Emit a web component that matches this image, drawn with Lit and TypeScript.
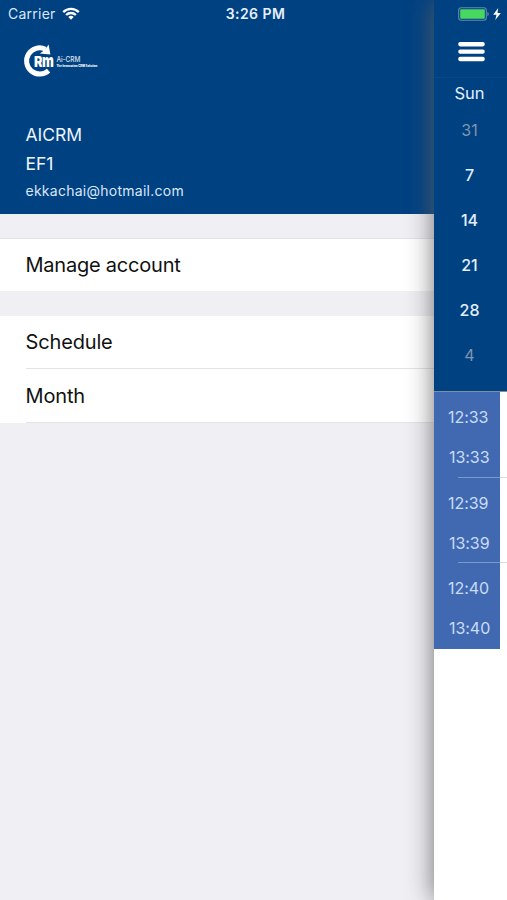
import { LitElement, html, css, svg } from "lit";
import { customElement } from "lit/decorators.js";

@customElement("status-bar")
class StatusBar extends LitElement {
  static styles = css`
    :host { display: grid; grid-template-columns: 1fr auto 1fr; align-items: center; height: 27px; padding: 0 6px 0 8px; color: #d9e7f8; font-size: 14px; }
    .left, .right { display: flex; align-items: center; }
    .left { gap: 6px; letter-spacing: 0.25px; }
    .right { justify-content: flex-end; gap: 4px; }
    .clock { font-weight: 600; font-size: 14px; letter-spacing: 0.46px; color: #e6effb; padding-left: 2px; }
    svg { display: block; }
  `;
  render() {
    return html`
      <div class="left">
        <span>Carrier</span>
        <svg width="18" height="13" viewBox="0 0 18 13" fill="none" stroke="#fff" stroke-width="2.3">
          <path d="M1.2 5.1A11 11 0 0 1 16.8 5.1" />
          <path d="M4.1 8A7 7 0 0 1 13.9 8" />
          <path d="M9 12.7L6.3 10A3.9 3.9 0 0 1 11.7 10Z" fill="#fff" stroke="none" />
        </svg>
      </div>
      <span class="clock">3:26 PM</span>
      <div class="right">
        <svg width="31" height="14" viewBox="0 0 31 14">
          <rect x=".7" y=".7" width="27.6" height="12.6" rx="2.5" fill="none" stroke="#6489ad" stroke-width="1.1" />
          <rect x="2.2" y="2.2" width="24.6" height="9.6" rx="1" fill="#47d85f" />
          <path d="M29.4 4.8Q30.8 5.5 30.8 7T29.4 9.2Z" fill="#6489ad" />
        </svg>
        <svg width="8" height="12" viewBox="0 0 8 12"><path d="M5.2 0L.2 6.7H3.5L2.3 12L7.8 4.9H4.5Z" fill="#fff" /></svg>
      </div>
    `;
  }
}

@customElement("brand-logo")
class BrandLogo extends LitElement {
  static styles = css`
    :host { display: block; }
    svg { display: block; }
    .mono { font: 900 14px Inter, "Liberation Sans", sans-serif; }
    .small { font-size: 18px; }
    .name { font: 500 7px Inter, "Liberation Sans", sans-serif; }
    .tag { font: 800 2.8px Inter, "Liberation Sans", sans-serif; }
  `;
  render() {
    return html`
      <svg width="78" height="34" viewBox="0 0 78 34" fill="#fff">
        <path d="M25.6 27.6A13.1 13.1 0 1 1 22.4 6.2" fill="none" stroke="#fff" stroke-width="5" />
        <path d="M25.6 1.6L27.4 11.6L16.8 10.4Q22 8 25.6 1.6Z" />
        <g class="mono" stroke="#004182" stroke-width="2" paint-order="stroke">
          <text x="10.9" y="23.6" textLength="8.8" lengthAdjust="spacingAndGlyphs">R</text>
          <text class="small" x="19" y="23.6" textLength="11.8" lengthAdjust="spacingAndGlyphs">m</text>
        </g>
        <text class="name" x="33.4" y="18.9" textLength="24" lengthAdjust="spacingAndGlyphs" opacity=".85">Ai-CRM</text>
        <text class="tag" x="33.4" y="24" textLength="41" lengthAdjust="spacingAndGlyphs">The Innovation CRM Solution</text>
      </svg>
    `;
  }
}

@customElement("side-drawer")
class SideDrawer extends LitElement {
  static styles = css`
    :host { display: block; background: #efeff4; }
    .profile { box-sizing: border-box; height: 214px; padding: 43px 23px 0; background: #004182; color: #eef5fd; }
    .who { padding: 43px 3px 0 2.5px; font-size: 17.5px; line-height: 29px; }
    .who div { height: 29px; }
    .who .mail { font-size: 14px; line-height: 25px; letter-spacing: 0.26px; color: #d9e7f8; }
    .code { letter-spacing: -0.1px; }
    .group { background: #fff; margin-top: 24px; color: #111; font-size: 20px; letter-spacing: -0.15px; }
    .group.first { border-top: 1px solid #e2e2e5; }
    .row { box-sizing: border-box; height: 53px; margin-left: 25.5px; line-height: 53px; }
    .first .row { height: 52px; }
    .lined { margin-top: 25px; }
    .lined .row { border-bottom: 1px solid #e4e4e8; line-height: 52px; }
    .lined .row + .row { height: 53.5px; line-height: 54px; }
    .wide { letter-spacing: -0.22px; }
  `;
  render() {
    return html`
      <div class="profile">
        <brand-logo></brand-logo>
        <div class="who">
          <div>AICRM</div>
          <div class="code">EF1</div>
          <div class="mail">ekkachai@hotmail.com</div>
        </div>
      </div>
      <div class="group first"><div class="row wide">Manage account</div></div>
      <div class="group lined">
        <div class="row">Schedule</div>
        <div class="row">Month</div>
      </div>
    `;
  }
}

@customElement("calendar-edge")
class CalendarEdge extends LitElement {
  static styles = css`
    :host { display: block; background: #fff; box-shadow: 0 0 26px 0 rgba(95, 95, 95, 0.88); }
    .month { box-sizing: border-box; height: 391px; background: #004182; color: #e4effc; }
    .nav { box-sizing: border-box; height: 78px; padding: 42px 0 0 24.5px; border-bottom: 1px solid #07478a; }
    .nav svg { display: block; }
    .day { height: 45.1px; line-height: 45.1px; width: 72px; text-align: center; font-size: 16px; font-weight: 500; }
    .name { height: 29.8px; line-height: 30px; font-size: 16.5px; font-weight: 400; }
    .out { color: #7f96ad; font-weight: 400; }
    .event { position: relative; box-sizing: border-box; width: 66px; height: 85.5px; padding: 5px 0 0 14.5px; background: #4169b2; color: #c9dcf8; font-size: 16px; letter-spacing: -0.05px; }
    .event div { height: 40.2px; line-height: 40.2px; }
    .event div + div { padding-left: 1px; }
    .event.ruled::after { content: ""; position: absolute; left: 24.5px; right: -8px; bottom: 0; height: 1px; background: linear-gradient(90deg, #7d97c6 42px, #dcdce0 42px); }
    .events { border-top: 1px solid #7e8fa5; }
  `;
  days = ["31", "7", "14", "21", "28", "4"];
  events = [["12:33", "13:33"], ["12:39", "13:39"], ["12:40", "13:40"]];
  render() {
    return html`
      <div class="month">
        <div class="nav">
          <svg width="27" height="20" viewBox="0 0 27 20" fill="#fff">
            ${[0, 7.4, 14.8].map((y) => svg`<rect x=".3" y=${y} width="26.4" height="4.4" rx="1.8" />`)}
          </svg>
        </div>
        <div class="day name">Sun</div>
        ${this.days.map((d, i) => html`<div class="day ${i === 0 || i === 5 ? "out" : ""}">${d}</div>`)}
      </div>
      <div class="events">
        ${this.events.map((e, i) => html`<div class="event ${i < 2 ? "ruled" : ""}">${e.map((t) => html`<div>${t}</div>`)}</div>`)}
      </div>
    `;
  }
}

@customElement("app-root")
class AppRoot extends LitElement {
  static styles = css`
    :host { display: block; position: relative; height: 900px; overflow: hidden; font-family: Inter, "Liberation Sans", sans-serif; }
    .screen { display: grid; grid-template-columns: 433.5px 73.5px; height: 900px; }
    .status { position: absolute; inset: 0 0 auto; z-index: 2; }
  `;
  render() {
    return html`
      <div class="screen">
        <side-drawer></side-drawer>
        <calendar-edge></calendar-edge>
      </div>
      <status-bar class="status"></status-bar>
    `;
  }
}
